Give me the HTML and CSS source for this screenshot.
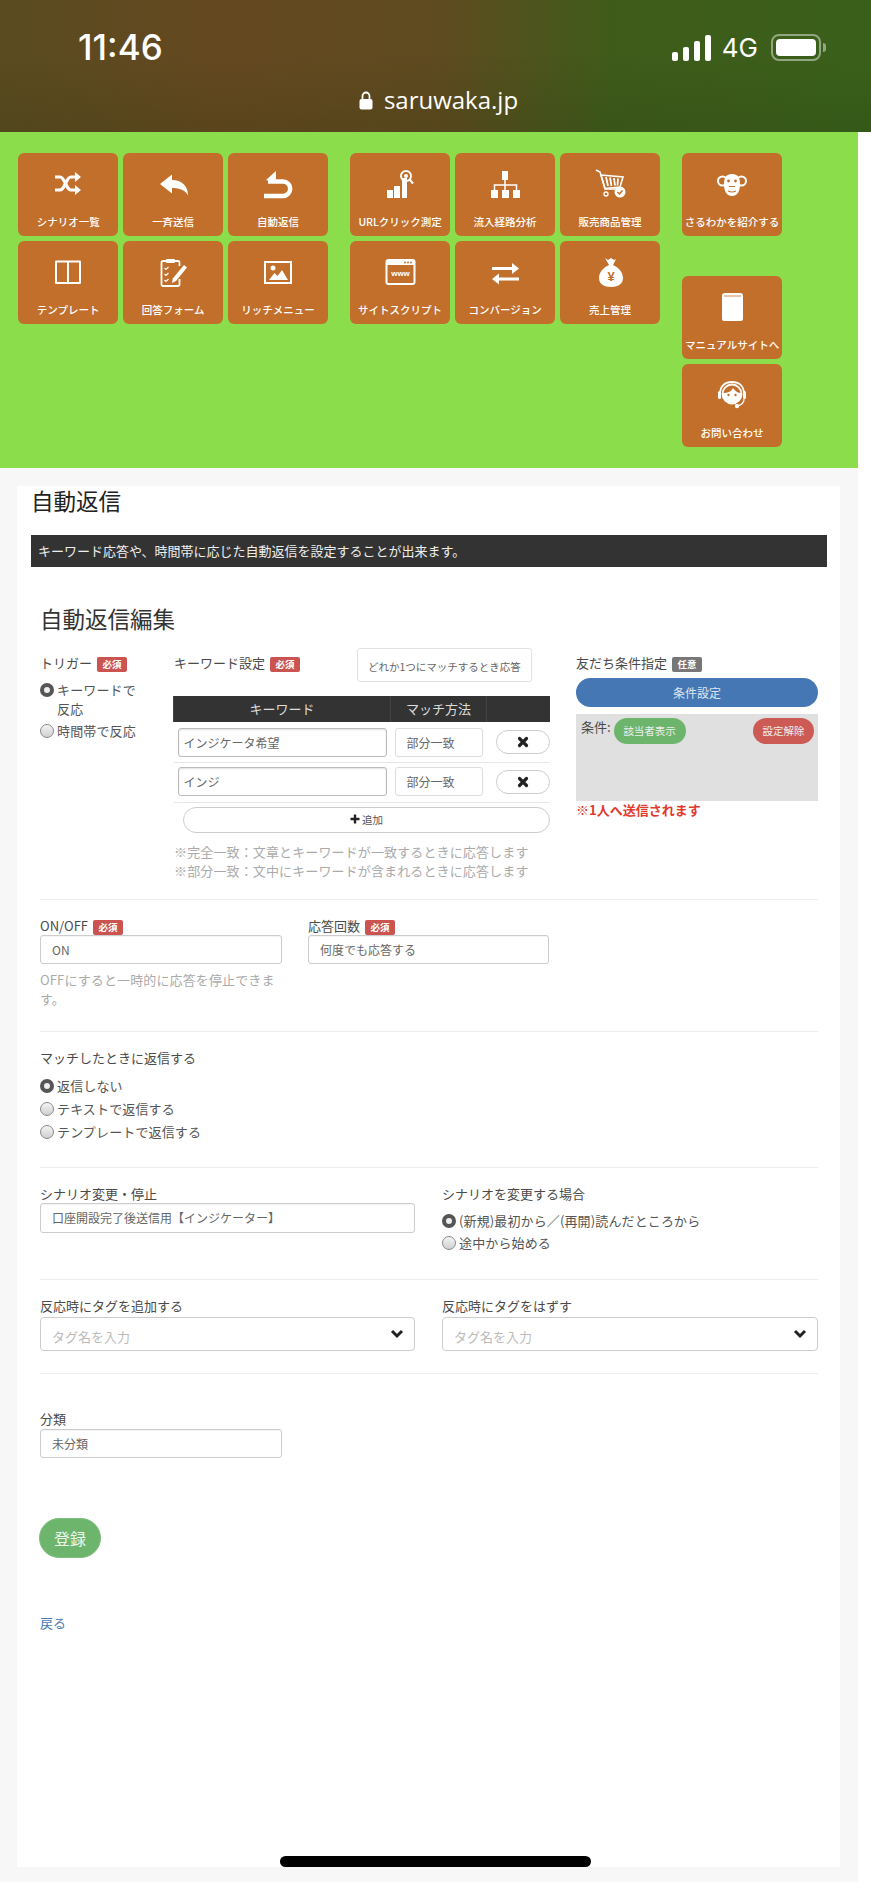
FILE: index.html
```html
<!DOCTYPE html>
<html lang="ja">
<head>
    <meta charset="UTF-8">
    <meta name="viewport" content="width=device-width, initial-scale=1.0">
    <title>自動返信 - saruwaka.jp</title>
    <link rel="stylesheet" href="styles.css">
</head>
<body>
    <div class="phone-bar">
        <div class="phone-top">
            <span class="clock">11:46</span>
            <div class="phone-state">
                <span class="signal"><i></i><i></i><i></i><i></i></span>
                <span class="net">4G</span>
                <span class="battery"><i></i></span>
                <span class="battery-nub"></span>
            </div>
        </div>
        <div class="url">
            <svg class="lock" width="14" height="19" viewBox="0 0 14 19"><path d="M3.5 8V5a3.5 3.5 0 0 1 7 0v3" fill="none" stroke="#fff" stroke-width="1.8"/><rect x="0.5" y="8" width="13" height="10.5" rx="2" fill="#fff"/></svg>
            <span>saruwaka.jp</span>
        </div>
    </div>

    <div class="wrap">
        <nav class="menu">
            <div class="menu-group">
                <a class="tile">
                    <svg width="36" height="36" viewBox="0 0 36 36"><path d="M5 10h5c5 0 6 13 11 13h5M5 23h5c5 0 6-13 11-13h5" fill="none" stroke="#fff" stroke-width="3.2"/><path d="M25 5l6 5-6 5zM25 18l6 5-6 5z" fill="#fff"/></svg>
                    <span>シナリオ一覧</span>
                </a>
                <a class="tile">
                    <svg width="36" height="36" viewBox="0 0 36 36"><path d="M5 17L17 7.5V13c10 0 16 6 16 15.500-3-5.500-8-7.500-16-7.500v5.500z" fill="#fff"/></svg>
                    <span>一斉送信</span>
                </a>
                <a class="tile">
                    <svg width="36" height="36" viewBox="0 0 36 36"><path d="M8 14.500h15a7.200 7.200 0 0 1 0 14.400H4" fill="none" stroke="#fff" stroke-width="4.500"/><path d="M16 4L6 13l10 3z" fill="#fff"/></svg>
                    <span>自動返信</span>
                </a>
                <a class="tile">
                    <svg width="36" height="36" viewBox="0 0 36 36"><path d="M6 6.500h24v21.500H6z" fill="none" stroke="#fff" stroke-width="2" stroke-linejoin="round"/><path d="M18 6.500V28" stroke="#fff" stroke-width="2"/></svg>
                    <span>テンプレート</span>
                </a>
                <a class="tile">
                    <svg width="36" height="36" viewBox="0 0 36 36"><path d="M11 6H8a1.500 1.500 0 0 0-1.500 1.500v22A1.500 1.500 0 0 0 8 31h15a1.500 1.500 0 0 0 1.500-1.500V24M20 6h3a1.500 1.500 0 0 1 1.500 1.500V11" fill="none" stroke="#fff" stroke-width="1.800"/><rect x="11" y="4" width="9" height="4" rx="1" fill="#fff"/><path d="M9.500 13l1.500 1.500 2.500-2.500M9.500 19l1.500 1.500 2.500-2.500M9.500 25l1.500 1.500 2.500-2.500" fill="none" stroke="#fff" stroke-width="1.200"/><path d="M29 10l3 2.500-11 13.500-4 2 .8-4.500z" fill="#fff"/></svg>
                    <span>回答フォーム</span>
                </a>
                <a class="tile">
                    <svg width="36" height="36" viewBox="0 0 36 36"><rect x="5" y="7" width="26" height="21" fill="none" stroke="#fff" stroke-width="2"/><circle cx="13" cy="13" r="2.500" fill="#fff"/><path d="M9 25l5.500-7 3 3 4.500-6 6 10z" fill="#fff"/></svg>
                    <span>リッチメニュー</span>
                </a>
            </div>

            <div class="menu-group">
                <a class="tile">
                    <svg width="36" height="36" viewBox="0 0 36 36"><path d="M5 23h6v8H5zM12 19h6v12h-6zM20 11h5v20h-5z" fill="#fff"/><circle cx="24" cy="9" r="5" fill="none" stroke="#fff" stroke-width="2"/><circle cx="24" cy="9" r="2" fill="#fff"/><path d="M27.500 12.500l3.500 4" stroke="#fff" stroke-width="2.200"/></svg>
                    <span>URLクリック測定</span>
                </a>
                <a class="tile">
                    <svg width="36" height="36" viewBox="0 0 36 36"><path d="M15 4h6v9h-6zM4 23h7v8H4zM15 23h7v8h-7zM26 23h7v8h-7z" fill="#fff"/><path d="M18 13v10M7.500 23v-5h22v5" fill="none" stroke="#fff" stroke-width="1.500"/></svg>
                    <span>流入経路分析</span>
                </a>
                <a class="tile">
                    <svg width="36" height="36" viewBox="0 0 36 36"><path d="M4 3l4 2 5 17h13" fill="none" stroke="#fff" stroke-width="1.500"/><path d="M9 8l22 2-3 10-15 1.500z" fill="none" stroke="#fff" stroke-width="1.600"/><path d="M14 10l2 9M18 10.500l1.500 8.500M22 11l1 7.500M26 11.500l-.5 7" stroke="#fff" stroke-width="1.800"/><circle cx="14" cy="27" r="2" fill="none" stroke="#fff" stroke-width="1.300"/><circle cx="28" cy="25" r="5.500" fill="#fff"/><path d="M25.500 25l2 2 3-3.500" fill="none" stroke="#c26f2c" stroke-width="1.500"/></svg>
                    <span>販売商品管理</span>
                </a>
                <a class="tile">
                    <svg width="36" height="36" viewBox="0 0 36 36"><rect x="4.500" y="5" width="28" height="24" rx="2" fill="none" stroke="#fff" stroke-width="2"/><path d="M4.500 5h28v5h-28z" fill="#fff"/><circle cx="23" cy="7.500" r="1" fill="#c26f2c"/><circle cx="26" cy="7.500" r="1" fill="#c26f2c"/><circle cx="29" cy="7.500" r="1" fill="#c26f2c"/><text class="www" x="18.500" y="21" text-anchor="middle">www</text></svg>
                    <span>サイトスクリプト</span>
                </a>
                <a class="tile">
                    <svg width="36" height="36" viewBox="0 0 36 36"><path d="M5 12h20v3H5zM12 22.500h20v3H12z" fill="#fff"/><path d="M25 8l7 5.500-7 5.500zM12 18.500L5 24l7 5.500z" fill="#fff"/></svg>
                    <span>コンバージョン</span>
                </a>
                <a class="tile">
                    <svg width="36" height="36" viewBox="0 0 36 36"><path d="M13 3l3 2 3-2 3 2 2-1-3 6c5 2 10 7 10 13 0 6-5 9-12 9S7 29 7 23c0-6 5-11 10-13z" fill="#fff"/><text class="yen" x="19" y="26" text-anchor="middle">¥</text></svg>
                    <span>売上管理</span>
                </a>
            </div>

            <div class="menu-side">
                <a class="tile">
                    <svg width="36" height="36" viewBox="0 0 36 36"><circle cx="8.500" cy="14" r="4.500" fill="none" stroke="#fff" stroke-width="2"/><circle cx="27.500" cy="14" r="4.500" fill="none" stroke="#fff" stroke-width="2"/><path d="M18 7c6 0 8 4 8 10 0 8-3 12-8 12s-8-4-8-12c0-6 2-10 8-10z" fill="#fff"/><circle cx="14.500" cy="14" r="1.400" fill="#c26f2c"/><circle cx="21.500" cy="14" r="1.400" fill="#c26f2c"/><path d="M15 19.500h6M14 24c3 1.500 5 1.500 8 0" fill="none" stroke="#c26f2c" stroke-width="1.200"/></svg>
                    <span>さるわかを紹介する</span>
                </a>
                <a class="tile tile-gap">
                    <svg width="36" height="36" viewBox="0 0 36 36"><path d="M8 6a3 3 0 0 1 3-3h15a3 3 0 0 1 3 3v23a2 2 0 0 1-2 2H10a2 2 0 0 1-2-2z" fill="#fff"/><path d="M10 6h17" stroke="#c26f2c" stroke-width="0.800"/></svg>
                    <span>マニュアルサイトへ</span>
                </a>
                <a class="tile">
                    <svg width="36" height="36" viewBox="0 0 36 36"><path d="M6 16C6 8 11 4 18 4s12 4 12 12" fill="none" stroke="#fff" stroke-width="1.800"/><circle cx="18" cy="16" r="9.500" fill="none" stroke="#fff" stroke-width="1.800"/><path d="M9 15c5 0 9-2 10-5 2 3 5 5 8 5v2c0 5-4 8-9 8s-9-3-9-8z" fill="#fff"/><circle cx="14.500" cy="17" r="1.200" fill="#c26f2c"/><circle cx="21.500" cy="17" r="1.200" fill="#c26f2c"/><rect x="4" y="13" width="3" height="8" rx="1.500" fill="#fff"/><rect x="29" y="13" width="3" height="8" rx="1.500" fill="#fff"/><path d="M30 21c0 4-3 6-6 7" fill="none" stroke="#fff" stroke-width="1.300"/><circle cx="23" cy="28" r="2.200" fill="#fff"/></svg>
                    <span>お問い合わせ</span>
                </a>
            </div>
        </nav>

        <main class="panel">
            <h2 class="page-title">自動返信</h2>
            <div class="notice">キーワード応答や、時間帯に応じた自動返信を設定することが出来ます。</div>

            <form class="edit-form">
                <h3 class="form-title">自動返信編集</h3>

                <div class="trigger-row">
                    <div>
                        <div class="field-label top-label">トリガー <span class="badge">必須</span></div>
                        <div class="radio-list trigger-list">
                            <label class="radio"><input type="radio" name="trigger" checked><span>キーワードで反応</span></label>
                            <label class="radio"><input type="radio" name="trigger"><span>時間帯で反応</span></label>
                        </div>
                    </div>

                    <div>
                        <div class="keyword-head">
                            <div class="field-label top-label">キーワード設定 <span class="badge">必須</span></div>
                            <div class="any-match">どれか1つにマッチするとき応答</div>
                        </div>
                        <table class="keyword-table">
                            <thead>
                                <tr><th class="col-word">キーワード</th><th class="col-match">マッチ方法</th><th class="col-del"></th></tr>
                            </thead>
                            <tbody>
                                <tr>
                                    <td class="cell-word"><input class="word-input" type="text" value="インジケータ希望"></td>
                                    <td class="cell-match"><div class="match-box">部分一致</div></td>
                                    <td class="cell-del"><button type="button" class="del-button"><svg width="12" height="12" viewBox="0 0 12 12"><path d="M2.500 2.500l7 7M9.500 2.500l-7 7" stroke="#222" stroke-width="3.200" stroke-linecap="round"/></svg></button></td>
                                </tr>
                                <tr>
                                    <td class="cell-word"><input class="word-input" type="text" value="インジ"></td>
                                    <td class="cell-match"><div class="match-box">部分一致</div></td>
                                    <td class="cell-del"><button type="button" class="del-button"><svg width="12" height="12" viewBox="0 0 12 12"><path d="M2.500 2.500l7 7M9.500 2.500l-7 7" stroke="#222" stroke-width="3.200" stroke-linecap="round"/></svg></button></td>
                                </tr>
                            </tbody>
                        </table>
                        <button type="button" class="add-button"><svg width="10" height="10" viewBox="0 0 10 10"><path d="M5 .5v9M.5 5h9" stroke="#222" stroke-width="2.400"/></svg> 追加</button>
                        <p class="help keyword-help">※完全一致：文章とキーワードが一致するときに応答します<br>※部分一致：文中にキーワードが含まれるときに応答します</p>
                    </div>

                    <div class="friend-col">
                        <div class="field-label top-label">友だち条件指定 <span class="badge badge-gray">任意</span></div>
                        <button type="button" class="condition-button">条件設定</button>
                        <div class="condition-box">
                            <span>条件:</span>
                            <button type="button" class="pill pill-green">該当者表示</button>
                            <button type="button" class="pill pill-red">設定解除</button>
                        </div>
                        <div class="send-note">※1人へ送信されます</div>
                    </div>
                </div>

                <hr class="rule rule-first">

                <div class="onoff-row">
                    <div>
                        <div class="field-label">ON/OFF <span class="badge">必須</span></div>
                        <input class="text-input" type="text" value="ON">
                        <p class="help onoff-help">OFFにすると一時的に応答を停止できます。</p>
                    </div>
                    <div>
                        <div class="field-label">応答回数 <span class="badge">必須</span></div>
                        <input class="text-input" type="text" value="何度でも応答する">
                    </div>
                </div>

                <hr class="rule rule-onoff">

                <div class="reply-row">
                    <div class="field-label">マッチしたときに返信する</div>
                    <div class="radio-list reply-list">
                        <label class="radio"><input type="radio" name="reply" checked><span>返信しない</span></label>
                        <label class="radio"><input type="radio" name="reply"><span>テキストで返信する</span></label>
                        <label class="radio"><input type="radio" name="reply"><span>テンプレートで返信する</span></label>
                    </div>
                </div>

                <hr class="rule rule-reply">

                <div class="two-col scenario-row">
                    <div>
                        <div class="field-label">シナリオ変更・停止</div>
                        <input class="text-input scenario-input" type="text" value="口座開設完了後送信用【インジケーター】">
                    </div>
                    <div>
                        <div class="field-label">シナリオを変更する場合</div>
                        <div class="radio-list scenario-list">
                            <label class="radio"><input type="radio" name="start" checked><span>(新規)最初から／(再開)読んだところから</span></label>
                            <label class="radio"><input type="radio" name="start"><span>途中から始める</span></label>
                        </div>
                    </div>
                </div>

                <hr class="rule rule-scenario">

                <div class="two-col tag-row">
                    <div>
                        <div class="field-label">反応時にタグを追加する</div>
                        <div class="tag-field"><span>タグ名を入力</span><svg width="14" height="10" viewBox="0 0 14 10"><path d="M2 2l5 5 5-5" fill="none" stroke="#222" stroke-width="3"/></svg></div>
                    </div>
                    <div>
                        <div class="field-label">反応時にタグをはずす</div>
                        <div class="tag-field"><span>タグ名を入力</span><svg width="14" height="10" viewBox="0 0 14 10"><path d="M2 2l5 5 5-5" fill="none" stroke="#222" stroke-width="3"/></svg></div>
                    </div>
                </div>

                <hr class="rule rule-tag">

                <div class="category-row">
                    <div class="field-label">分類</div>
                    <input class="text-input category-input" type="text" value="未分類">
                </div>

                <button type="button" class="save-button">登録</button>
                <a class="back-link">戻る</a>
            </form>
        </main>
    </div>

    <div class="home-bar"></div>
</body>
</html>
```

FILE: styles.css
```css
* {
    box-sizing: border-box;
}

body {
    margin: 0;
    background: #fff;
    color: #4a4a4a;
    font-family: "Noto Sans CJK JP", "Noto Sans", sans-serif;
    font-size: 13px;
    line-height: 18px;
}

.phone-bar {
    height: 132px;
    background:
        linear-gradient(180deg, rgba(0, 0, 0, 0) 40%, rgba(20, 40, 10, 0.12) 100%),
        linear-gradient(90deg, #5a4b20 0%, #64481f 25%, #5f4a1f 50%, #3f5b1a 70%, #39601a 100%);
    color: #fff;
    font-family: Inter, "Liberation Sans", sans-serif;
}

.phone-top {
    display: flex;
    justify-content: space-between;
    padding: 27px 45px 0 78px;
    height: 82px;
}

.clock {
    font-size: 35px;
    line-height: 40px;
    font-weight: 500;
}

.phone-state {
    display: flex;
    align-items: flex-start;
    padding-top: 7px;
}

.signal {
    display: flex;
    align-items: flex-end;
    gap: 5px;
    height: 26px;
    margin-top: 1px;
}

.signal i {
    width: 6px;
    border-radius: 2px;
    background: #fff;
}

.signal i:nth-child(1) { height: 9px; }
.signal i:nth-child(2) { height: 14px; }
.signal i:nth-child(3) { height: 20px; }
.signal i:nth-child(4) { height: 26px; }

.net {
    margin-left: 11px;
    font-size: 26px;
    line-height: 28px;
}

.battery {
    width: 50px;
    height: 27px;
    margin-left: 13px;
    padding: 3px;
    border: 2px solid rgba(255, 255, 255, 0.45);
    border-radius: 8px;
}

.battery i {
    display: block;
    height: 100%;
    border-radius: 4px;
    background: #fff;
}

.battery-nub {
    width: 3px;
    height: 9px;
    margin: 9px 0 0 2px;
    border-radius: 0 3px 3px 0;
    background: rgba(255, 255, 255, 0.45);
}

.url {
    display: flex;
    justify-content: center;
    align-items: center;
    gap: 11px;
    padding-left: 6px;
    font-family: "Open Sans", "Liberation Sans", sans-serif;
    font-size: 24px;
    line-height: 36px;
}

.wrap {
    width: 858px;
    height: 1750px;
    background: #f7f7f7;
}

.menu {
    display: flex;
    gap: 21.700px;
    height: 336px;
    padding: 21px 0 0 18px;
    background: #8bdd4b;
}

.menu-group {
    display: grid;
    grid-template-columns: repeat(3, 100.300px);
    grid-auto-rows: 83px;
    gap: 5px 4.700px;
}

.menu-side {
    display: flex;
    flex-direction: column;
    gap: 5px;
    width: 100.300px;
}

.tile {
    display: flex;
    flex-direction: column;
    align-items: center;
    height: 83px;
    padding-top: 14px;
    border-radius: 6px;
    background: #c26f2c;
    color: #fff;
}

.tile span {
    margin-top: 12px;
    font-size: 10.500px;
    line-height: 14px;
    font-weight: 500;
    white-space: nowrap;
}

.tile-gap {
    margin-top: 35px;
}

.www {
    font-family: "Liberation Sans", sans-serif;
    font-size: 8px;
    font-weight: 700;
    fill: #fff;
}

.yen {
    font-family: "Liberation Sans", sans-serif;
    font-size: 13px;
    font-weight: 700;
    fill: #c26f2c;
}

.panel {
    width: 823px;
    height: 1381px;
    margin: 18px 0 0 17px;
    padding-top: 2px;
    background: #fff;
}

.page-title {
    margin: 0 0 23px 14px;
    font-size: 22.500px;
    line-height: 24px;
    font-weight: 400;
    color: #222;
}

.notice {
    height: 32px;
    margin: 0 13px 0 14px;
    padding-left: 7px;
    background: #333;
    color: #eee;
    line-height: 32px;
}

.edit-form {
    padding: 36px 22px 0 23px;
}

.form-title {
    margin: 0 0 15px;
    font-size: 22.500px;
    line-height: 30px;
    font-weight: 400;
    color: #333;
}

.trigger-row {
    display: grid;
    grid-template-columns: 134px 376px 1fr;
}

.field-label {
    white-space: nowrap;
}

.top-label {
    padding-top: 6px;
}

.badge {
    display: inline-block;
    width: 30px;
    height: 15px;
    margin-left: 2px;
    border-radius: 2px;
    background: #cb5450;
    color: #fff;
    font-size: 9.500px;
    line-height: 15px;
    font-weight: 700;
    text-align: center;
    vertical-align: 0;
}

.badge-gray {
    background: #777;
}

.radio-list {
    display: flex;
    flex-direction: column;
    gap: 4px;
}

.radio {
    display: flex;
    gap: 3px;
    line-height: 19px;
    letter-spacing: 0.130px;
    color: #555;
}

.radio input {
    flex: none;
    width: 14px;
    height: 14px;
    margin: 3px 0 0;
    appearance: none;
    border: 1px solid #8a8a8a;
    border-radius: 50%;
    background: linear-gradient(180deg, #f4f4f4, #cfcfcf);
}

.radio input:checked {
    border: 4px solid #555;
    background: #eee;
}

.trigger-list {
    width: 100px;
    margin-top: 8px;
    gap: 3px;
}

.keyword-head {
    display: flex;
    justify-content: space-between;
    padding-right: 18px;
}

.any-match {
    width: 175px;
    height: 34px;
    padding: 10px 0 0 10px;
    border: 1px solid #e2e2e2;
    border-radius: 3px;
    color: #666;
    font-size: 10.500px;
    line-height: 16px;
    white-space: nowrap;
}

.keyword-table {
    width: 376px;
    margin: 14px 0 0 -1px;
    border-collapse: collapse;
    table-layout: fixed;
}

.keyword-table th {
    height: 26px;
    padding: 0;
    background: #333;
    border-left: 1px solid #444;
    color: #ddd;
    font-weight: 400;
}

.col-word { width: 217px; }
.col-match { width: 96px; }
.col-del { width: 63px; }

.keyword-table td {
    height: 40px;
    padding: 6px 4px 4px;
    border-bottom: 1px solid #e6e6e6;
}

.keyword-table tr + tr td {
    padding-top: 4px;
    padding-bottom: 6px;
}

.keyword-table td.cell-del,
.keyword-table tr + tr td.cell-del {
    padding: 0 0 0 9px;
}

.word-input {
    display: block;
    width: 100%;
    height: 29px;
    padding: 0 5px;
    border: 1px solid #bbb;
    border-radius: 3px;
    box-shadow: inset 0 1px 2px rgba(0, 0, 0, 0.12);
    color: #666;
    font: inherit;
    font-size: 12px;
}

.match-box {
    height: 29px;
    padding-left: 11px;
    border: 1px solid #ddd;
    border-radius: 3px;
    color: #666;
    font-size: 12px;
    line-height: 27px;
}

.del-button {
    display: block;
    width: 54px;
    height: 24px;
    padding: 0;
    border: 1px solid #ccc;
    border-radius: 12px;
    background: #fff;
    line-height: 0;
}

.add-button {
    display: block;
    width: 367.500px;
    height: 26px;
    margin: 4px 0 0 8.500px;
    padding: 0;
    border: 1px solid #ccc;
    border-radius: 13px;
    background: #fff;
    color: #555;
    font: inherit;
    font-size: 10.500px;
}

.help {
    margin: 0;
    color: #aaa;
    line-height: 19px;
    letter-spacing: 0.130px;
}

.keyword-help {
    margin-top: 9px;
    white-space: nowrap;
}

.friend-col {
    padding-left: 26px;
}

.friend-col .top-label {
    height: 30px;
}

.condition-button {
    display: block;
    width: 100%;
    height: 29px;
    padding: 0;
    border: 0;
    border-radius: 15px;
    background: #4577b4;
    color: #dde6f2;
    font: inherit;
    font-size: 12px;
}

.condition-box {
    display: flex;
    align-items: flex-start;
    height: 87px;
    margin-top: 7px;
    padding: 4px 4px 0 5px;
    background: #e0e0e0;
}

.pill {
    height: 26px;
    padding: 0;
    border: 0;
    border-radius: 13px;
    color: #eee;
    font: inherit;
    font-size: 10.500px;
}

.pill-green {
    width: 72px;
    margin-left: 3px;
    background: #6db56d;
}

.pill-red {
    width: 61px;
    margin-left: auto;
    background: #cc5a55;
}

.send-note {
    margin-top: -1px;
    color: #e03a2e;
    font-weight: 700;
    line-height: 19px;
}

.rule {
    margin: 0;
    border: 0;
    border-top: 1px solid #eee;
}

.rule-first { margin-top: 19px; }
.rule-onoff { margin-top: 23px; }
.rule-reply { margin-top: 26px; }
.rule-scenario { margin-top: 27px; }
.rule-tag { margin-top: 22px; }

.onoff-row {
    display: grid;
    grid-template-columns: 242px 241px;
    column-gap: 26px;
    padding-top: 17px;
}

.text-input {
    display: block;
    width: 100%;
    height: 29px;
    padding: 0 11px;
    border: 1px solid #ccc;
    border-radius: 3px;
    box-shadow: inset 0 1px 1px rgba(0, 0, 0, 0.05);
    color: #666;
    font: inherit;
    font-size: 12px;
}

.onoff-help {
    margin-top: 6px;
}

.reply-row {
    padding-top: 17px;
}

.reply-list {
    margin-top: 9px;
}

.two-col {
    display: grid;
    grid-template-columns: 375px 376px;
    column-gap: 27px;
}

.scenario-row {
    padding-top: 17px;
}

.scenario-input {
    height: 30px;
}

.scenario-list {
    margin-top: 8px;
    gap: 3px;
}

.tag-row {
    padding-top: 17px;
}

.tag-field {
    display: flex;
    justify-content: space-between;
    align-items: flex-start;
    height: 34px;
    margin-top: 2px;
    padding: 10px 10px 0 11px;
    border: 1px solid #ccc;
    border-radius: 4px;
    color: #bbb;
}

.tag-field svg {
    margin-top: 1px;
}

.category-row {
    padding-top: 36px;
}

.category-input {
    width: 242px;
    margin-top: 1px;
}

.save-button {
    display: block;
    width: 62px;
    height: 40px;
    margin: 60px 0 0 -1px;
    padding: 0;
    border: 1px solid #7fbf7f;
    border-radius: 20px;
    background: #6db56d;
    color: #eef7ee;
    font: inherit;
    font-size: 16px;
}

.back-link {
    display: block;
    margin-top: 56px;
    color: #4a7ab0;
}

.home-bar {
    position: absolute;
    left: 280px;
    top: 1856px;
    width: 311px;
    height: 11px;
    border-radius: 6px;
    background: #000;
}
```
